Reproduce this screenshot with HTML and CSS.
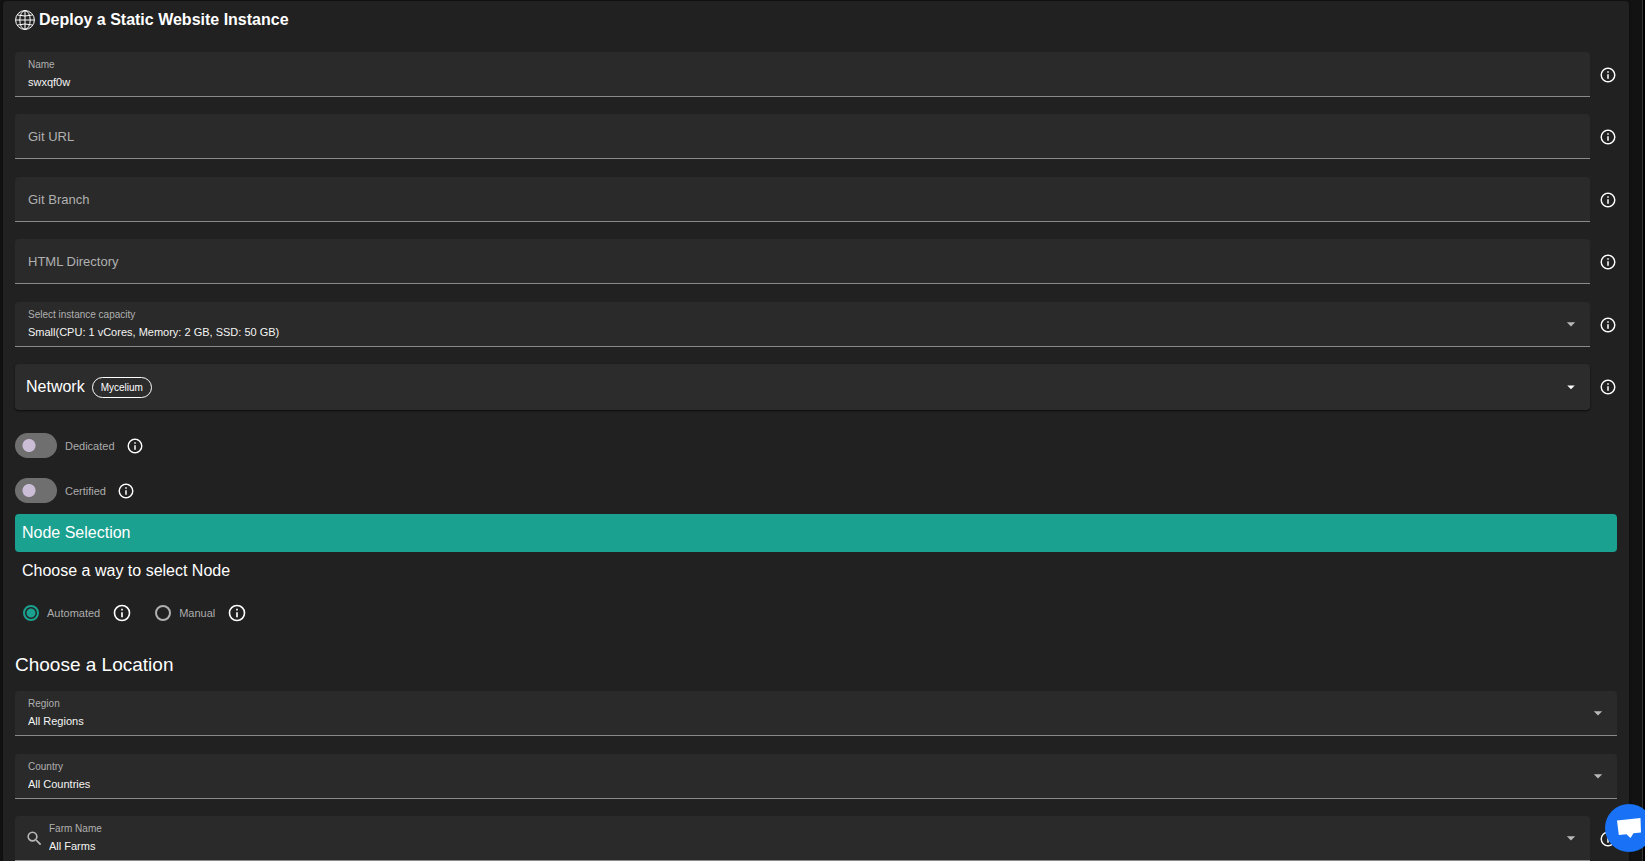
FILE: index.html
```html
<!DOCTYPE html>
<html lang="en">
<head>
<meta charset="utf-8">
<meta name="viewport" content="width=device-width, initial-scale=1">
<title>Deploy a Static Website Instance</title>
<link rel="stylesheet" href="styles.css">
</head>
<body>
<svg class="sprite" aria-hidden="true">
  <symbol id="info" viewBox="0 0 24 24"><path d="M11 9h2V7h-2m1 13c-4.41 0-8-3.59-8-8s3.59-8 8-8 8 3.59 8 8-3.59 8-8 8m0-18A10 10 0 0 0 2 12a10 10 0 0 0 10 10 10 10 0 0 0 10-10A10 10 0 0 0 12 2m-1 15h2v-6h-2v6Z"/></symbol>
  <symbol id="caret" viewBox="0 0 24 24"><path d="M7 10l5 5 5-5H7Z"/></symbol>
</svg>
<main class="card">
  <h1 class="title">
    <svg class="globe" viewBox="0 0 20 20" aria-hidden="true">
      <circle cx="10" cy="10" r="9.4"/><ellipse cx="10" cy="10" rx="5.2" ry="9.4"/>
      <path d="M10 .6v18.800M.6 10h18.800M2.500 5q7.500 2 15 0M2.500 15q7.500-2 15 0"/>
    </svg>
    Deploy a Static Website Instance
  </h1>

  <form class="form">
    <div class="fields">
      <div class="pair">
        <div class="row">
          <div class="field"><label class="label" for="name">Name</label><input class="control" id="name" type="text" value="swxqf0w"></div>
          <svg class="info"><use href="#info"/></svg>
        </div>
        <div class="row">
          <div class="field empty"><label class="label" for="url">Git URL</label><input class="control" id="url" type="text"></div>
          <svg class="info"><use href="#info"/></svg>
        </div>
      </div>
      <div class="pair">
        <div class="row">
          <div class="field empty"><label class="label" for="branch">Git Branch</label><input class="control" id="branch" type="text"></div>
          <svg class="info"><use href="#info"/></svg>
        </div>
        <div class="row">
          <div class="field empty"><label class="label" for="dir">HTML Directory</label><input class="control" id="dir" type="text"></div>
          <svg class="info"><use href="#info"/></svg>
        </div>
      </div>
      <div class="pair">
        <div class="row">
          <div class="field"><label class="label" for="capacity">Select instance capacity</label><select class="control" id="capacity"><option>Small(CPU: 1 vCores, Memory: 2 GB, SSD: 50 GB)</option></select><svg class="caret"><use href="#caret"/></svg></div>
          <svg class="info"><use href="#info"/></svg>
        </div>
        <div class="row">
          <button class="panel" type="button"><span class="panel-title">Network</span><span class="chip">Mycelium</span><svg class="panel-caret"><use href="#caret"/></svg></button>
          <svg class="info"><use href="#info"/></svg>
        </div>
      </div>
    </div>

    <div class="switches">
      <div class="switch-row"><input class="switch" id="dedicated" type="checkbox"><label class="option" for="dedicated">Dedicated</label><svg class="info"><use href="#info"/></svg></div>
      <div class="switch-row"><input class="switch" id="certified" type="checkbox"><label class="option" for="certified">Certified</label><svg class="info"><use href="#info"/></svg></div>
    </div>

    <h2 class="banner">Node Selection</h2>
    <h3 class="subtitle">Choose a way to select Node</h3>
    <div class="radios">
      <div class="radio-item"><input class="radio" type="radio" name="way" id="auto" checked><label class="option" for="auto">Automated</label><svg class="info large"><use href="#info"/></svg></div>
      <div class="radio-item"><input class="radio" type="radio" name="way" id="manual"><label class="option" for="manual">Manual</label><svg class="info large"><use href="#info"/></svg></div>
    </div>

    <h2 class="heading">Choose a Location</h2>
    <div class="fields">
      <div class="row">
        <div class="field"><label class="label" for="region">Region</label><select class="control" id="region"><option>All Regions</option></select><svg class="caret"><use href="#caret"/></svg></div>
      </div>
      <div class="pair">
        <div class="row">
          <div class="field"><label class="label" for="country">Country</label><select class="control" id="country"><option>All Countries</option></select><svg class="caret"><use href="#caret"/></svg></div>
        </div>
        <div class="row">
          <div class="field searchable"><svg class="search" viewBox="0 0 24 24"><path d="M9.500 3A6.500 6.500 0 0 1 16 9.500c0 1.610-.59 3.090-1.560 4.230l.27.27h.79l5 5-1.500 1.500-5-5v-.79l-.27-.27A6.516 6.516 0 0 1 9.500 16a6.500 6.500 0 0 1 0-13m0 2C7 5 5 7 5 9.500S7 14 9.500 14 14 12 14 9.500 12 5 9.500 5Z"/></svg><label class="label" for="farm">Farm Name</label><select class="control" id="farm"><option>All Farms</option></select><svg class="caret"><use href="#caret"/></svg></div>
          <svg class="info"><use href="#info"/></svg>
        </div>
      </div>
    </div>
  </form>
</main>
<button class="chat" type="button" aria-label="Open chat">
  <svg class="chat-icon" viewBox="0 0 24 20" aria-hidden="true"><path d="M0 2.500 23.500 0 24 14.500 16.500 15.300 13.500 20 9.500 16.300 1.800 17Z"/></svg>
</button>
</body>
</html>
```
FILE: styles.css
```css
* { box-sizing: border-box; }

body {
  margin: 0;
  height: 100vh;
  overflow: hidden;
  padding: 1px 16px 0 3px;
  background: #121212;
  box-shadow: inset -2px 0 #000, inset -3px 0 #333;
  color: #fff;
  font-family: "Liberation Sans", Arial, sans-serif;
  font-size: 11px;
}

h1, h2, h3 { margin: 0; font-weight: 400; }
.sprite { display: none; }
svg { flex: none; fill: currentColor; }

.card {
  padding: 8px 12px 18px;
  background: #212121;
  border-radius: 4px;
  box-shadow: 0 1px 3px #0008;
}

.title {
  display: flex;
  align-items: center;
  gap: 4px;
  height: 22px;
  margin-bottom: 21px;
  font-size: 16px;
  font-weight: 700;
}
.globe { width: 20px; height: 20px; fill: none; stroke: #fff; stroke-width: 1; }

.fields { display: flex; flex-direction: column; gap: 18px; }
.pair { display: flex; flex-direction: column; gap: 17px; }
.row { display: flex; align-items: center; gap: 9px; height: 45px; }
.info { width: 18px; height: 18px; }
.info.large { width: 20px; height: 20px; }

.field {
  position: relative;
  flex: 1;
  height: 45px;
  background: #2a2a2a;
  border-bottom: 1px solid #8a8a8a;
  border-radius: 4px 4px 0 0;
}
.label {
  position: absolute;
  left: 13px;
  top: 7px;
  color: #b0b0b0;
  font-size: 10px;
  line-height: 12px;
  pointer-events: none;
}
.empty .label { top: 15px; font-size: 13px; line-height: 16px; }
.control {
  display: block;
  width: 100%;
  height: 44px;
  padding: 18px 13px 2px;
  border: 0;
  outline: 0;
  appearance: none;
  background: transparent;
  color: #f4f4f4;
  font: 11px/16px "Liberation Sans", Arial, sans-serif;
}
.caret {
  position: absolute;
  right: 9px;
  top: 12px;
  width: 20px;
  height: 20px;
  color: #b8b8b8;
  pointer-events: none;
}
.search { position: absolute; left: 10px; top: 13px; width: 19px; height: 19px; color: #b8b8b8; }
.searchable .label { left: 34px; }
.searchable .control { padding-left: 34px; }

.panel {
  display: flex;
  flex: 1;
  align-items: center;
  height: 46px;
  padding: 1px 10px 0 11px;
  border: 0;
  border-radius: 4px;
  background: #2c2c2c;
  box-shadow: 0 1px 2px #000a;
  color: #fff;
  font: 16px "Liberation Sans", Arial, sans-serif;
}
.chip {
  margin-left: 7px;
  padding: 0 8px;
  border: 1px solid #fff;
  border-radius: 12px;
  font-size: 10px;
  line-height: 19px;
}
.panel-caret { width: 18px; height: 18px; margin-left: auto; }

.switches { display: flex; flex-direction: column; gap: 20px; margin-top: 24px; }
.switch-row { display: flex; align-items: center; height: 25px; }
.switch {
  appearance: none;
  width: 42px;
  height: 25px;
  margin: 0 8px 0 0;
  border-radius: 13px;
  background: radial-gradient(circle at 14px 50%, #cbbdd6 6px, #6f6f6f 7px);
}
.option { color: #acacac; font-size: 11px; }
.switch-row .info { margin-left: 11px; }

.banner {
  margin-top: 11px;
  padding: 0 7px;
  border-radius: 4px;
  background: #1aa18f;
  font-size: 16px;
  line-height: 38px;
}
.subtitle { padding: 0 7px; font-size: 16px; line-height: 38px; }
.radios { display: flex; gap: 23px; margin-top: 12px; padding-left: 8px; }
.radio-item { display: flex; align-items: center; height: 22px; }
.radio {
  appearance: none;
  width: 16px;
  height: 16px;
  margin: 0 8px 0 0;
  border: 2px solid #b0b0b0;
  border-radius: 50%;
}
.radio:checked { border-color: #1aa18f; background: radial-gradient(circle, #1aa18f 4px, transparent 5px); }
.radio-item .info { margin-left: 12px; }

.heading { margin: 28px 0 13px; font-size: 19px; line-height: 26px; }

.chat {
  position: fixed;
  right: -8px;
  bottom: 9px;
  display: grid;
  place-items: center;
  width: 48px;
  height: 48px;
  padding: 0;
  border: 0;
  border-radius: 50%;
  background: #1972f5;
  color: #fff;
}
.chat-icon { width: 24px; height: 20px; }
```
